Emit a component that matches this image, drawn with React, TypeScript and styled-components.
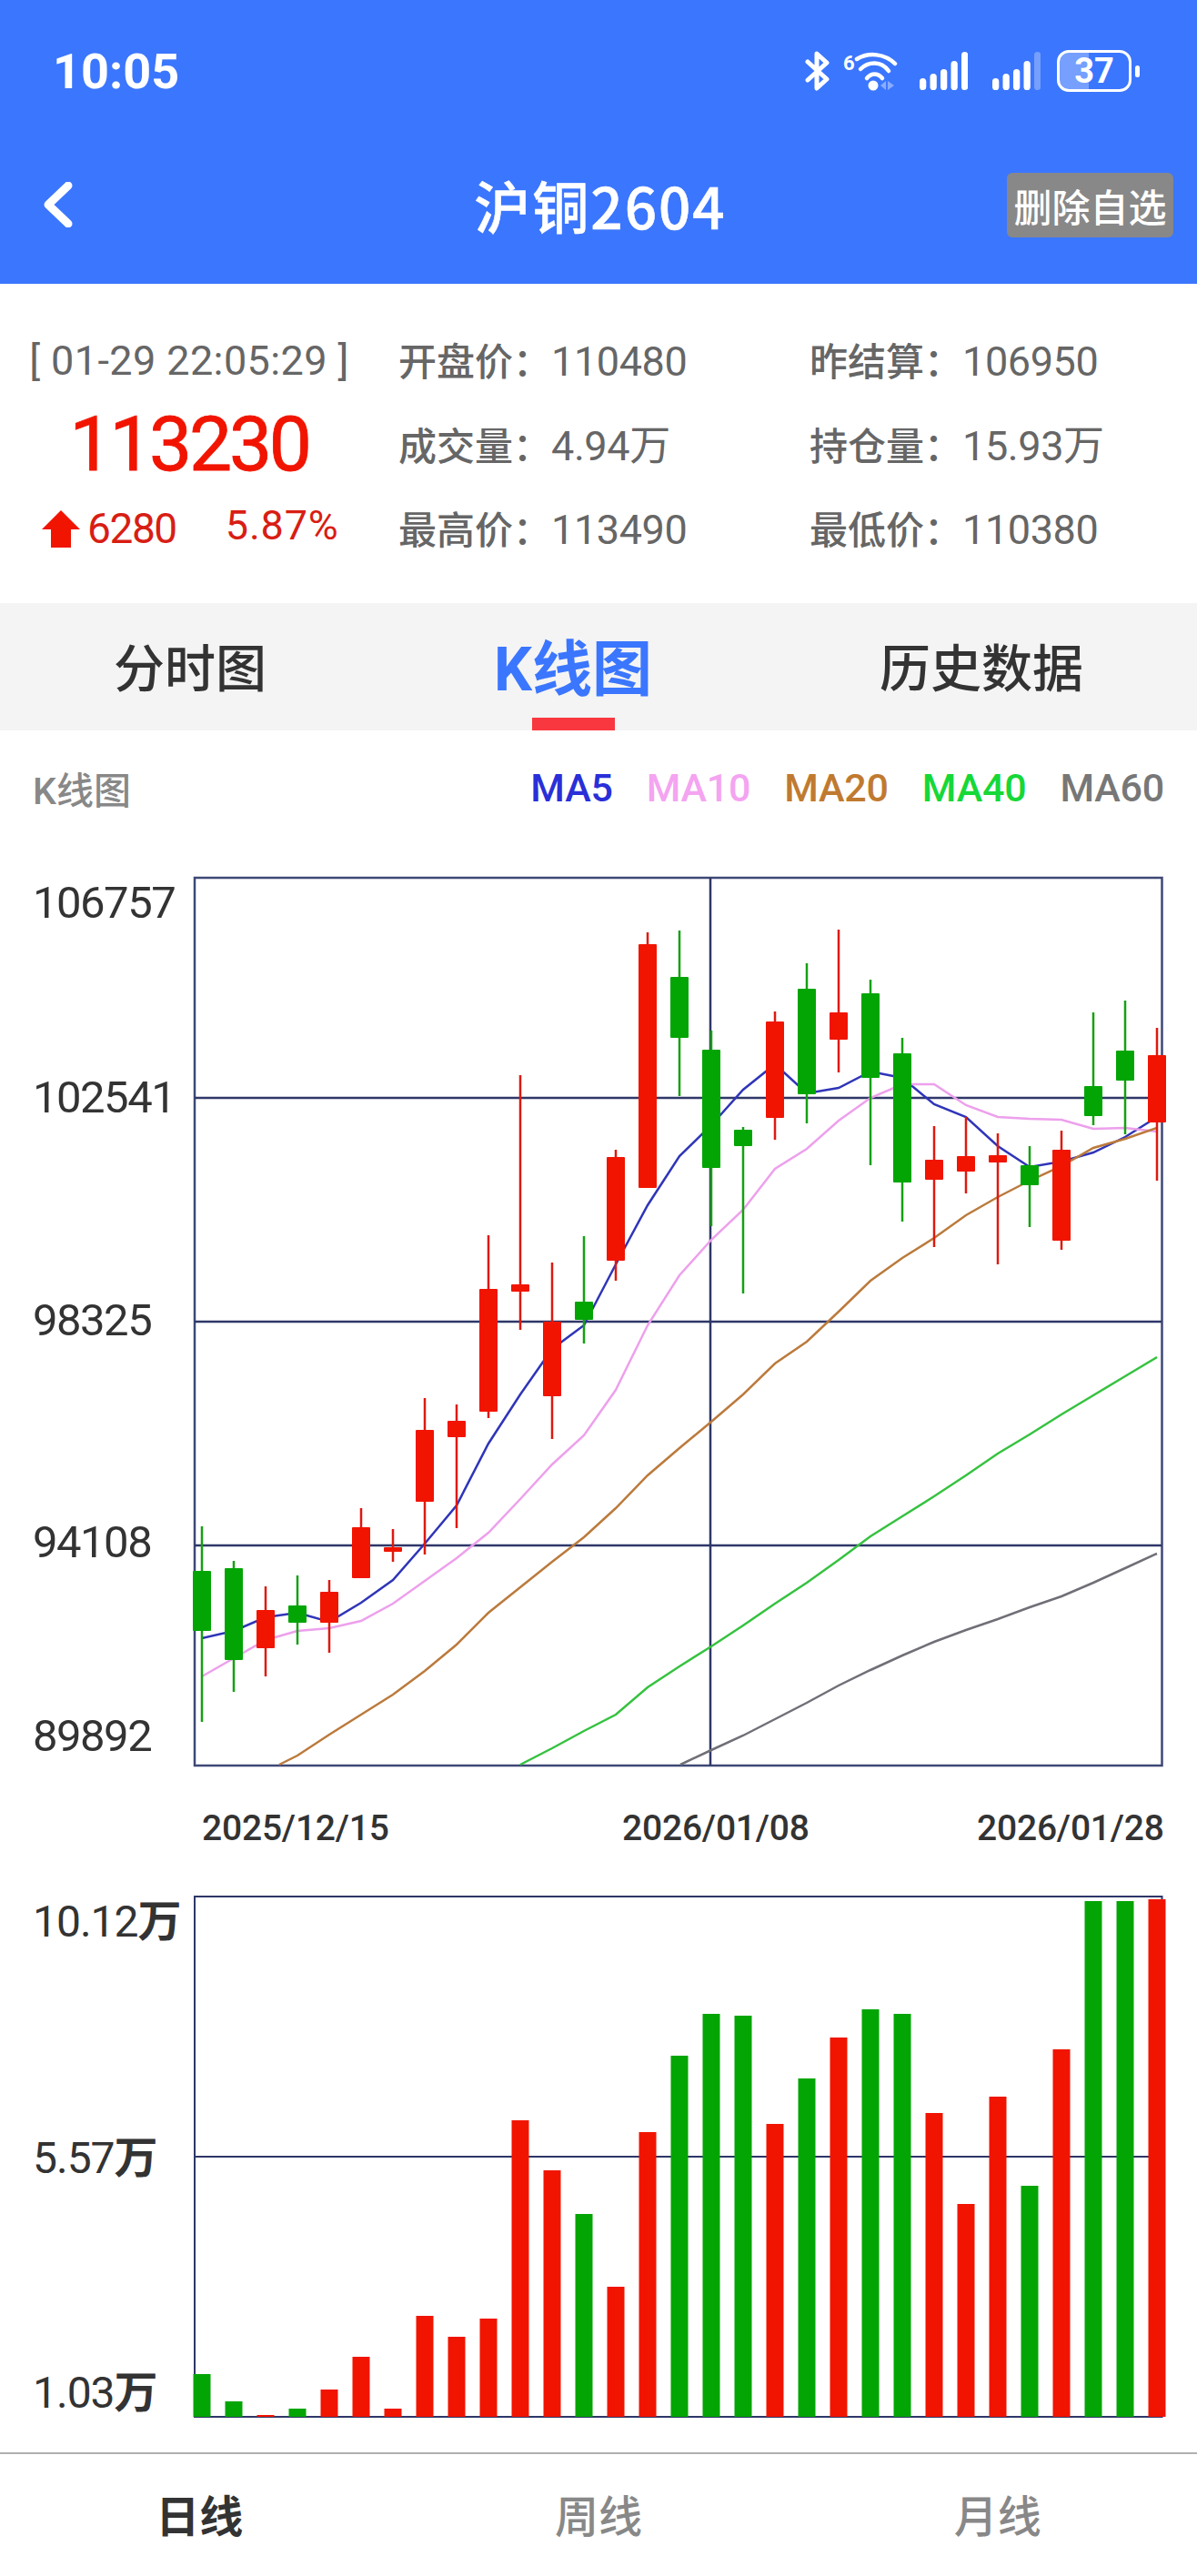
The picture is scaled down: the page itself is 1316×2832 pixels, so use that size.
import styled, { createGlobalStyle } from 'styled-components';

const FONT = `Roboto, "Noto Sans CJK SC", sans-serif`;
const RED = '#f11400';
const GREEN = '#03a505';
const NAVY = '#2e3768';

const GlobalStyle = createGlobalStyle`
    html, body {
        margin: 0;
        padding: 0;
        background: #fff;
        font-family: ${FONT};
    }
`;

const Page = styled.div`
    width: 1316px;
    height: 2832px;
    display: flex;
    flex-direction: column;
    overflow: hidden;
    background: #fff;
`;

const Header = styled.header`
    height: 312px;
    background: #3b76fe;
    color: #fff;
`;

const StatusBar = styled.div`
    height: 156px;
    padding: 0 63px 0 58px;
    display: flex;
    align-items: center;
    justify-content: space-between;
`;

const Clock = styled.span`
    font-size: 54px;
    font-weight: 700;
`;

const StatusIcons = styled.div`
    display: flex;
    align-items: center;
`;

const StatusIcon = styled.svg<{ $after?: number }>`
    display: block;
    margin-right: ${(p) => p.$after ?? 0}px;
`;

const Battery = styled.div`
    width: 82px;
    height: 46px;
    box-sizing: border-box;
    border: 3.5px solid #fff;
    border-radius: 13px;
    background: linear-gradient(90deg, rgba(255, 255, 255, 0.3) 42%, transparent 42%);
    display: flex;
    align-items: center;
    justify-content: center;
    font-size: 38px;
    font-weight: 700;
    line-height: 38px;
`;

const BatteryTip = styled.div`
    width: 5px;
    height: 13px;
    margin-left: 4px;
    border-radius: 3px;
    background: #fff;
`;

const NavBar = styled.div`
    height: 156px;
    box-sizing: border-box;
    padding: 0 26px 18px 46px;
    display: grid;
    grid-template-columns: 1fr auto 1fr;
    align-items: center;
`;

const NavTitle = styled.h1`
    margin: 0 16px 0 0;
    font-size: 62px;
    font-weight: 500;
    letter-spacing: 2px;
    -webkit-text-stroke: 0.6px #fff;
    font-family: "Noto Sans CJK SC", sans-serif;
`;

const RemoveButton = styled.button`
    justify-self: end;
    width: 183px;
    height: 71px;
    padding: 0;
    border: 0;
    border-radius: 6px;
    background: #888888;
    color: #fff;
    font-family: ${FONT};
    font-size: 42px;
    font-weight: 500;
`;

const Summary = styled.section`
    height: 351px;
    box-sizing: border-box;
    padding-top: 38px;
    display: grid;
    grid-template-columns: 438px 452px 1fr;
    grid-auto-rows: 92.5px;
    align-items: center;
    color: #666;
    font-size: 42px;
`;

const Stamp = styled.div`
    width: 416px;
    font-size: 45px;
    text-align: center;
    letter-spacing: 0.4px;
`;

const LastPrice = styled.div`
    width: 416px;
    text-align: center;
    font-size: 84px;
    letter-spacing: -3.3px;
    -webkit-text-stroke: 0.8px ${RED};
    color: ${RED};
`;

const ChangeRow = styled.div`
    padding-left: 46px;
    display: flex;
    align-items: center;
    color: #d81e14;
`;

const Change = styled.span`
    margin: 0 54px 0 8px;
    font-size: 46px;
    letter-spacing: -1.4px;
`;

const Percent = styled.span`
    margin-top: -8px;
    font-size: 45px;
    letter-spacing: 0.8px;
`;

const Quote = styled.div`
    display: flex;
    align-items: baseline;
    margin-top: -4px;
`;

const QuoteName = styled.span`
    width: 168px;
    font-weight: 500;
`;

const QuoteValue = styled.span`
    font-size: 45px;
    letter-spacing: -0.4px;
`;

const Tabs = styled.nav`
    height: 140px;
    box-sizing: border-box;
    padding-bottom: 6px;
    background: #f4f4f4;
    display: grid;
    grid-template-columns: 418px 424px 474px;
`;

const Tab = styled.div<{ $active?: boolean }>`
    position: relative;
    display: flex;
    align-items: center;
    justify-content: center;
    font-size: ${(p) => (p.$active ? 66 : 56)}px;
    font-weight: ${(p) => (p.$active ? 700 : 500)};
    color: ${(p) => (p.$active ? '#3b76fe' : '#333')};

    ${(p) =>
        p.$active &&
        `
        &::after {
            content: '';
            position: absolute;
            left: 167px;
            bottom: -6px;
            width: 91px;
            height: 14px;
            background: #f9373f;
        }
    `}
`;

const ChartHead = styled.div`
    height: 128px;
    box-sizing: border-box;
    padding: 0 36px 2px 36px;
    display: flex;
    align-items: center;
    justify-content: space-between;
    font-size: 41px;
    font-weight: 500;
    color: #888;
`;

const Legend = styled.div`
    display: flex;
    gap: 37px;
`;

const LegendItem = styled.span<{ $color: string }>`
    font-size: 43px;
    letter-spacing: -0.2px;
    color: ${(p) => p.$color};
`;

const ChartRow = styled.div<{ $top: number }>`
    margin-top: ${(p) => p.$top}px;
    padding-left: 36px;
    display: grid;
    grid-template-columns: 170px 1110px;
`;

const AxisColumn = styled.div<{ $pad?: number }>`
    padding-top: ${(p) => p.$pad ?? 0}px;
    display: flex;
    flex-direction: column;
`;

const AxisLabel = styled.span<{ $gap: number }>`
    margin-top: ${(p) => p.$gap}px;
    height: 40px;
    line-height: 40px;
    font-size: 49px;
    letter-spacing: -1.5px;
    color: #333;
    white-space: nowrap;
`;

const VolumeLabel = styled(AxisLabel)`
    font-size: 48px;
    letter-spacing: -1px;
`;

const VolumeUnit = styled.b`
    font-weight: 700;
`;

const Plot = styled.svg`
    display: block;
    overflow: visible;
`;

const DateAxis = styled.div`
    height: 136px;
    padding: 0 0 4px 222px;
    box-sizing: border-box;
    display: grid;
    grid-template-columns: 462px 390px 1fr;
    align-items: center;
    font-size: 39px;
    font-weight: 500;
    letter-spacing: -0.2px;
    color: #333;
`;

const Footer = styled.footer`
    margin-top: auto;
    height: 136px;
    box-sizing: border-box;
    padding-bottom: 4px;
    border-top: 2px solid #b0b0b0;
    display: grid;
    grid-template-columns: repeat(3, 1fr);
    align-items: center;
    text-align: center;
`;

const FooterTab = styled.span<{ $active?: boolean }>`
    font-size: 48px;
    font-weight: ${(p) => (p.$active ? 700 : 500)};
    color: ${(p) => (p.$active ? '#333' : '#888')};
`;

// wick top, body top, body bottom, wick bottom, colour
const CANDLES: [number, number, number, number, 'r' | 'g'][] = [
    [1678, 1727, 1793, 1893, 'g'],
    [1716, 1724, 1825, 1860, 'g'],
    [1744, 1770, 1812, 1843, 'r'],
    [1732, 1765, 1784, 1808, 'g'],
    [1737, 1750, 1784, 1817, 'r'],
    [1658, 1679, 1735, 1735, 'r'],
    [1681, 1701, 1706, 1717, 'r'],
    [1537, 1572, 1651, 1709, 'r'],
    [1544, 1562, 1580, 1680, 'r'],
    [1358, 1417, 1552, 1559, 'r'],
    [1182, 1412, 1420, 1462, 'r'],
    [1388, 1453, 1535, 1582, 'r'],
    [1359, 1431, 1451, 1477, 'g'],
    [1264, 1272, 1386, 1408, 'r'],
    [1025, 1038, 1306, 1306, 'r'],
    [1023, 1074, 1141, 1205, 'g'],
    [1133, 1154, 1284, 1348, 'g'],
    [1239, 1242, 1260, 1422, 'g'],
    [1112, 1123, 1229, 1253, 'r'],
    [1059, 1087, 1203, 1235, 'g'],
    [1022, 1113, 1143, 1179, 'r'],
    [1077, 1092, 1185, 1281, 'g'],
    [1141, 1158, 1300, 1343, 'g'],
    [1238, 1275, 1297, 1371, 'r'],
    [1228, 1271, 1288, 1312, 'r'],
    [1246, 1270, 1278, 1390, 'r'],
    [1260, 1281, 1303, 1349, 'g'],
    [1243, 1264, 1364, 1374, 'r'],
    [1113, 1194, 1227, 1237, 'g'],
    [1100, 1155, 1188, 1247, 'g'],
    [1130, 1160, 1234, 1298, 'r'],
];

const VOLUMES: [number, 'r' | 'g'][] = [
    [2610, 'g'], [2640, 'g'], [2655, 'r'], [2648, 'g'], [2627, 'r'], [2591, 'r'],
    [2648, 'r'], [2546, 'r'], [2569, 'r'], [2549, 'r'], [2331, 'r'], [2386, 'r'],
    [2434, 'g'], [2514, 'r'], [2344, 'r'], [2260, 'g'], [2214, 'g'], [2216, 'g'],
    [2335, 'r'], [2285, 'g'], [2240, 'r'], [2209, 'g'], [2214, 'g'], [2323, 'r'],
    [2423, 'r'], [2305, 'r'], [2403, 'g'], [2253, 'r'], [2090, 'g'], [2090, 'g'],
    [2088, 'r'],
];

// y values per candle, starting at candle index `from`
const seriesPoints = (from: number, ys: number[], start?: [number, number]) =>
    [...(start ? [start.join(',')] : []), ...ys.map((y, i) => `${222 + (from + i) * 35},${y}`)].join(' ');

const AVERAGES = [
    {
        color: '#2f35b8',
        points: seriesPoints(0, [
            1801, 1793, 1778, 1773, 1783, 1762, 1737, 1697, 1655, 1587, 1533, 1483, 1457, 1390, 1325, 1271,
            1237, 1198, 1170, 1202, 1196, 1178, 1185, 1214, 1228, 1260, 1283, 1277, 1267, 1250, 1228,
        ]),
    },
    {
        color: '#eda0ec',
        points: seriesPoints(0, [
            1843, 1823, 1803, 1793, 1790, 1782, 1763, 1738, 1713, 1685, 1648, 1610, 1578, 1528, 1457, 1402,
            1363, 1330, 1285, 1263, 1232, 1207, 1192, 1192, 1215, 1228, 1230, 1231, 1241, 1240, 1244,
        ]),
    },
    {
        color: '#bb7a3c',
        points: seriesPoints(3, [
            1930, 1907, 1885, 1863, 1837, 1808, 1773, 1745, 1717, 1690, 1658, 1622, 1592, 1563, 1533, 1499,
            1475, 1442, 1408, 1383, 1361, 1336, 1316, 1298, 1282, 1262, 1252, 1240,
        ], [307, 1940]),
    },
    {
        color: '#35c23f',
        points: seriesPoints(11, [
            1922, 1903, 1885, 1855, 1832, 1810, 1787, 1763, 1740, 1715, 1689, 1667, 1645, 1622, 1598, 1577,
            1555, 1534, 1513, 1492,
        ], [572, 1940]),
    },
    {
        color: '#6f6f77',
        points: seriesPoints(16, [
            1924, 1908, 1890, 1872, 1853, 1836, 1820, 1805, 1792, 1780, 1767, 1755, 1740, 1724, 1708,
        ], [748, 1940]),
    },
];

const PRICE_LABELS = [
    { text: '106757', gap: 8 },
    { text: '102541', gap: 174 },
    { text: '98325', gap: 205 },
    { text: '94108', gap: 204 },
    { text: '89892', gap: 173 },
];

const VOLUME_LABELS = [
    { text: '10.12', gap: 13 },
    { text: '5.57', gap: 220 },
    { text: '1.03', gap: 218 },
];

const LEGEND = [
    { name: 'MA5', color: '#2a2fd8' },
    { name: 'MA10', color: '#f4a4f0' },
    { name: 'MA20', color: '#c07a30' },
    { name: 'MA40', color: '#16d838' },
    { name: 'MA60', color: '#777777' },
];

const QUOTES = [
    [['开盘价：', '110480'], ['昨结算：', '106950']],
    [['成交量：', '4.94万'], ['持仓量：', '15.93万']],
    [['最高价：', '113490'], ['最低价：', '110380']],
];

const BluetoothIcon = () => (
    <StatusIcon width="27" height="44" viewBox="0 0 27 44" fill="none" $after={15}>
        <path
            d="M3 12L24 31L13 41V3L24 13L3 32"
            stroke="#fff"
            strokeWidth="5"
            strokeLinecap="round"
            strokeLinejoin="round"
        />
    </StatusIcon>
);

const WifiIcon = () => (
    <StatusIcon width="60" height="44" viewBox="0 0 60 44" fill="none" $after={24}>
        <text x="0" y="21" fill="#fff" fontSize="22" fontWeight="700" fontFamily="Roboto, sans-serif">
            6
        </text>
        <g stroke="#fff" strokeWidth="4.5" strokeLinecap="round">
            <path d="M15 9C28 1 46 3 57 14" />
            <path d="M19 20C28 11 42 11 50 22" />
            <path d="M26 30C31 24 38 24 43 30" />
        </g>
        <circle cx="33" cy="38" r="5.5" fill="#fff" />
        <path d="M41 38L47 33V43ZM49 33L56 38L49 43Z" fill="#fff" opacity="0.4" />
    </StatusIcon>
);

const SignalIcon = ({ dim, after }: { dim?: boolean; after: number }) => (
    <StatusIcon width="53" height="42" viewBox="0 0 53 42" fill="#fff" $after={after}>
        <rect x="0" y="29" width="7.3" height="13" rx="3.6" />
        <rect x="11.5" y="24" width="7.3" height="18" rx="3.6" />
        <rect x="23" y="19" width="7.3" height="23" rx="3.6" />
        <rect x="34.5" y="10" width="7.3" height="32" rx="3.6" />
        <rect x="46" y="0" width="7.3" height="42" rx="3.6" opacity={dim ? 0.3 : 1} />
    </StatusIcon>
);

const CandleChart = () => (
    <Plot width="1110" height="984" viewBox="206 960 1110 984">
        <rect x="214" y="965" width="1063.5" height="976" fill="none" stroke="#3e4876" strokeWidth="2.5" />
        {[1207, 1453, 1699].map((y) => (
            <line key={y} x1="214" x2="1277" y1={y} y2={y} stroke={NAVY} strokeWidth="2.5" />
        ))}
        <line x1="781" x2="781" y1="965" y2="1941" stroke={NAVY} strokeWidth="2.5" />
        {AVERAGES.map((line) => (
            <polyline key={line.color} points={line.points} fill="none" stroke={line.color} strokeWidth="2.5" />
        ))}
        {CANDLES.map(([high, top, bottom, low, side], i) => {
            const x = 222 + i * 35;
            const fill = side === 'r' ? RED : GREEN;
            return (
                <g key={x}>
                    <line x1={x} x2={x} y1={high} y2={low} stroke={side === 'r' ? '#dc1a10' : '#15a012'} strokeWidth="2.5" />
                    <rect x={x - 10} y={top} width="20" height={bottom - top} rx="1" fill={fill} />
                </g>
            );
        })}
    </Plot>
);

const VolumeChart = () => (
    <Plot width="1110" height="580" viewBox="206 2080 1110 580">
        <rect x="214" y="2085" width="1063.5" height="572" fill="none" stroke={NAVY} strokeWidth="2" />
        <line x1="214" x2="1277" y1="2371" y2="2371" stroke={NAVY} strokeWidth="2" />
        {VOLUMES.map(([top, side], i) => (
            <rect
                key={i}
                x={222 + i * 35 - 9.5}
                y={top}
                width="19"
                height={2657 - top}
                fill={side === 'r' ? RED : GREEN}
            />
        ))}
    </Plot>
);

const App = () => (
    <Page>
        <GlobalStyle />
        <Header>
            <StatusBar>
                <Clock>10:05</Clock>
                <StatusIcons>
                    <BluetoothIcon />
                    <WifiIcon />
                    <SignalIcon after={27} />
                    <SignalIcon dim after={18} />
                    <Battery>37</Battery>
                    <BatteryTip />
                </StatusIcons>
            </StatusBar>
            <NavBar>
                <svg width="34" height="50" viewBox="0 0 34 50" fill="none">
                    <path d="M29 4L7 25L29 46" stroke="#fff" strokeWidth="9" strokeLinecap="round" strokeLinejoin="round" />
                </svg>
                <NavTitle>沪铜2604</NavTitle>
                <RemoveButton>删除自选</RemoveButton>
            </NavBar>
        </Header>

        <Summary>
            <Stamp>[ 01-29 22:05:29 ]</Stamp>
            {QUOTES[0].map(([name, value]) => (
                <Quote key={name}>
                    <QuoteName>{name}</QuoteName>
                    <QuoteValue>{value}</QuoteValue>
                </Quote>
            ))}
            <LastPrice>113230</LastPrice>
            {QUOTES[1].map(([name, value]) => (
                <Quote key={name}>
                    <QuoteName>{name}</QuoteName>
                    <QuoteValue>{value}</QuoteValue>
                </Quote>
            ))}
            <ChangeRow>
                <svg width="42" height="41" viewBox="0 0 42 41" fill={RED}>
                    <path d="M21 0L42 21H32V41H10V21H0Z" />
                </svg>
                <Change>6280</Change>
                <Percent>5.87%</Percent>
            </ChangeRow>
            {QUOTES[2].map(([name, value]) => (
                <Quote key={name}>
                    <QuoteName>{name}</QuoteName>
                    <QuoteValue>{value}</QuoteValue>
                </Quote>
            ))}
        </Summary>

        <Tabs>
            <Tab>分时图</Tab>
            <Tab $active>K线图</Tab>
            <Tab>历史数据</Tab>
        </Tabs>

        <ChartHead>
            <span>K线图</span>
            <Legend>
                {LEGEND.map((item) => (
                    <LegendItem key={item.name} $color={item.color}>
                        {item.name}
                    </LegendItem>
                ))}
            </Legend>
        </ChartHead>

        <ChartRow $top={29}>
            <AxisColumn $pad={5}>
                {PRICE_LABELS.map((label) => (
                    <AxisLabel key={label.text} $gap={label.gap}>
                        {label.text}
                    </AxisLabel>
                ))}
            </AxisColumn>
            <CandleChart />
        </ChartRow>

        <DateAxis>
            <span>2025/12/15</span>
            <span>2026/01/08</span>
            <span>2026/01/28</span>
        </DateAxis>

        <ChartRow $top={0}>
            <AxisColumn>
                {VOLUME_LABELS.map((label) => (
                    <VolumeLabel key={label.text} $gap={label.gap}>
                        {label.text}
                        <VolumeUnit>万</VolumeUnit>
                    </VolumeLabel>
                ))}
            </AxisColumn>
            <VolumeChart />
        </ChartRow>

        <Footer>
            <FooterTab $active>日线</FooterTab>
            <FooterTab>周线</FooterTab>
            <FooterTab>月线</FooterTab>
        </Footer>
    </Page>
);

export default App;
